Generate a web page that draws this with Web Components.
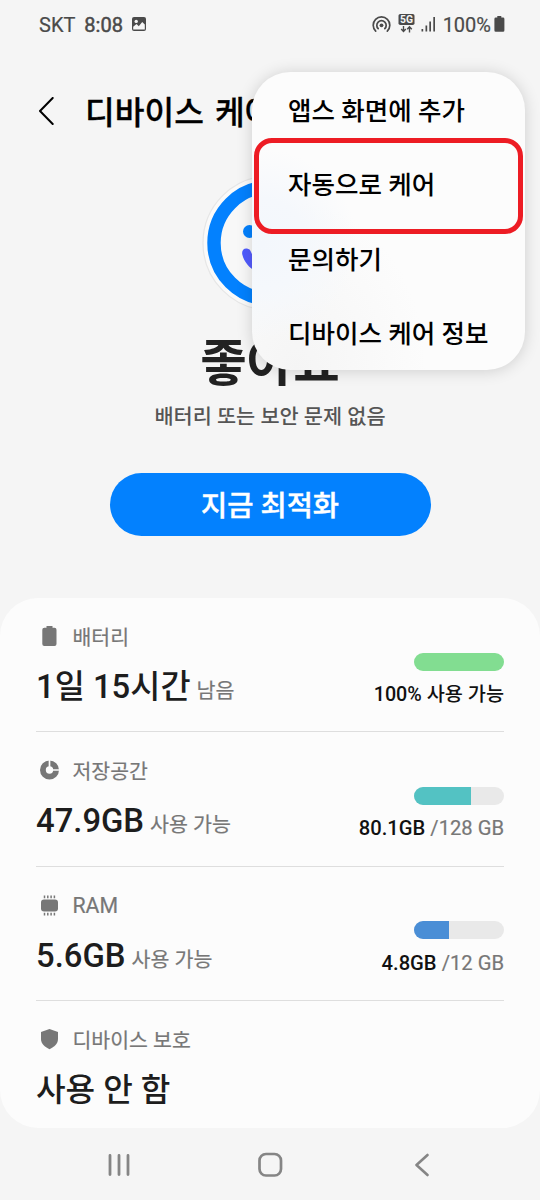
<!DOCTYPE html>
<html lang="ko">
<head>
<meta charset="utf-8">
<title>디바이스 케어</title>
<style>
html,body{margin:0;padding:0}
body{width:540px;height:1200px;overflow:hidden;background:#f5f5f5;font-family:Roboto,"Noto Sans CJK KR",sans-serif;color:#000}
</style>
</head>
<body>
<device-care></device-care>
<script>
const define = (name, html) => {
  const t = document.createElement('template');
  t.innerHTML = html;
  customElements.define(name, class extends HTMLElement {
    constructor() {
      super();
      this.attachShadow({mode: 'open'}).append(t.content.cloneNode(true));
    }
  });
};

define('status-bar', `
<style>
:host{display:flex;height:48px;padding:0 35px 0 39px;box-sizing:border-box;align-items:center;color:#4a4a4a;font-size:20px;line-height:46px;white-space:nowrap}
span{padding-top:2px;-webkit-text-stroke:.2px #4a4a4a}
.time{margin-left:9px;-webkit-text-stroke:.5px #4a4a4a}
.pic{margin-left:9px}
.cast{margin-left:auto}
.net{margin-left:7px;margin-top:-2px}
.sig{margin-left:6px}
.pct{margin-left:7px;padding-top:1px}
.bat{margin-left:3px}
svg{display:block;flex:none}
</style>
<span>SKT</span><span class="time">8:08</span>
<svg class="pic" width="14" height="14" viewBox="0 0 14 14"><rect width="14" height="14" rx="2" fill="#4a4a4a"/><circle cx="4.2" cy="4.4" r="1.7" fill="#f5f5f5"/><path d="M1.2 12.400V9.700L4.500 7l2.300 2.200 3.400-4.200 2.600 2.600v4.800z" fill="#f5f5f5"/></svg>
<svg class="cast" width="19" height="17" viewBox="0 0 19 17" fill="none" stroke="#4a4a4a" stroke-width="1.7" stroke-linecap="round"><path d="M3.700 15.200a8.300 8.300 0 1 1 11.600 0M6.200 12.700a4.700 4.700 0 1 1 6.600 0"/><circle cx="9.5" cy="9.300" r="1.900" fill="#4a4a4a" stroke="none"/></svg>
<svg class="net" width="17" height="20" viewBox="0 0 17 20"><rect x=".5" y="1" width="16" height="11" rx="1.8" fill="#4a4a4a"/><text x="8.5" y="10.2" text-anchor="middle" textLength="13" lengthAdjust="spacingAndGlyphs" font-family="Roboto" font-weight="700" font-size="10.500" fill="#f5f5f5">5G</text><path d="M5.5 13v5.500M3.2 16l2.3 2.5 2.3-2.5M11.5 19.500V14M9.2 16.300l2.3-2.5 2.3 2.5" fill="none" stroke="#4a4a4a" stroke-width="1.400"/></svg>
<svg class="sig" width="15" height="16" viewBox="0 0 15 16" fill="#4a4a4a"><rect x=".5" y="13" width="1.700" height="2.5"/><rect x="4.500" y="9.5" width="1.700" height="6"/><rect x="8.300" y="5.5" width="1.700" height="10"/><rect x="12.300" y="1" width="1.700" height="14.5"/></svg>
<span class="pct">100%</span>
<svg class="bat" width="11" height="16" viewBox="0 0 11 16"><path d="M3.3 0h4v1.6H9A1.4 1.4 0 0 1 10.4 3v11.2A1.4 1.4 0 0 1 9 15.7H1.8a1.4 1.4 0 0 1-1.4-1.5V3a1.4 1.4 0 0 1 1.4-1.4h1.5z" fill="#4a4a4a"/></svg>`);

define('title-bar', `
<style>
:host{display:flex;height:126px;align-items:center;padding-left:38px;box-sizing:border-box}
h1{margin:0 0 0 30px;font-size:32.300px;line-height:40px;font-weight:500;padding-top:4px;white-space:nowrap;word-spacing:3px;-webkit-text-stroke:.3px #000}
svg{display:block}
</style>
<svg width="17" height="28" viewBox="0 0 17 28" fill="none" stroke="#000" stroke-width="2" stroke-linecap="round" stroke-linejoin="round"><path d="M14.7 1 2 14l12.7 13"/></svg>
<h1><slot></slot></h1>`);

define('care-hero', `
<style>
:host{display:flex;flex-direction:column;align-items:center;height:424px}
.face{display:block;width:140px;height:140px;margin-top:-1px}
.state{font-size:50.5px;line-height:60px;font-weight:700;color:#222;margin-top:21px}
.note{font-size:20.8px;line-height:28px;font-weight:500;color:#555;margin-top:9px;white-space:nowrap}
button{width:321px;height:63px;border:0;border-radius:32px;background:#0381fe;color:#fff;font:500 28.5px/58px Roboto,"Noto Sans CJK KR",sans-serif;padding:5px 0 0;margin-top:42px;white-space:nowrap;-webkit-text-stroke:.4px #fff}
</style>
<svg class="face" viewBox="0 0 140 140">
<defs><linearGradient id="g" x1="0" x2="1"><stop stop-color="#4b5bff"/><stop offset=".5" stop-color="#6a5cf5"/><stop offset="1" stop-color="#0381fe"/></linearGradient></defs>
<circle cx="70" cy="70" r="67" fill="#fafafa" stroke="#e6e6e6" stroke-width="1.2"/>
<circle cx="70" cy="70" r="56" fill="#f8f8f8" stroke="#0381fe" stroke-width="13.4"/>
<circle cx="49.5" cy="58.5" r="6.5" fill="#0381fe"/><circle cx="90.5" cy="58.5" r="6.5" fill="#0381fe"/>
<path d="M47 75.5c-3.500-.5-5.500 2.500-4.700 6 2.800 11.500 13.500 20 27.700 20s25-8.500 27.700-20c.8-3.500-1.200-6.500-4.700-6-2 .3-3.500 1.500-4 3.500-2.500 7-10 11.500-19 11.500S53.500 86 51 79c-.5-2-2-3.200-4-3.500z" fill="url(#g)"/>
</svg>
<div class="state">좋아요</div>
<div class="note">배터리 또는 보안 문제 없음</div>
<button>지금 최적화</button>`);

define('usage-bar', `
<style>
:host{display:block;width:90px;height:18px;border-radius:9px;overflow:hidden;background:#e9e9e9}
:host::before{content:"";display:block;height:100%;width:var(--fill);background:var(--tone)}
</style>`);

define('care-row', `
<style>
:host{display:block;height:134.5px;padding:0 36px;box-sizing:border-box}
.in{height:100%;display:flex;justify-content:space-between;box-sizing:border-box;border-bottom:var(--rule,1px solid #dedede)}
.label{display:flex;align-items:center;height:26px;margin-top:25px;font-size:20.5px;line-height:26px;color:#777;-webkit-text-stroke:.2px #777}
.icon{width:26px;height:26px;margin-right:10.5px;display:flex}
.text{padding-top:3px}
.value{margin-top:18px;height:40px;line-height:40px;font-size:32.800px;font-weight:500;color:#1d1d1d;white-space:nowrap}
.side{display:flex;flex-direction:column;align-items:flex-end;padding-top:54.600px;font-size:20.2px;font-weight:500;color:#111;line-height:26px;white-space:nowrap}
.txt{margin-top:10.500px}
::slotted(small){font-size:20.6px;color:#777;font-weight:400;margin-left:6px;-webkit-text-stroke:.2px #777}
</style>
<div class="in"><div><div class="label"><span class="icon"><slot name="icon"></slot></span><span class="text"><slot name="label"></slot></span></div><div class="value"><slot></slot></div></div>
<div class="side"><slot name="bar"></slot><div class="txt"><slot name="side"></slot></div></div></div>`);

define('care-card', `
<style>
:host{display:block;height:530px;background:#fcfcfc;border-radius:38px;overflow:hidden}
svg{display:block}
i{font-style:normal;font-weight:400;color:#777;-webkit-text-stroke:.2px #777}
</style>
<care-row style="height:134px">
<svg slot="icon" width="26" height="26" viewBox="0 0 26 26"><path d="M10.500 3h6v1.700h2a2 2 0 0 1 2 2V21a2 2 0 0 1-2 2h-10.200a2 2 0 0 1-2-2V6.700a2 2 0 0 1 2-2h2.200z" fill="#777"/></svg>
<span slot="label">배터리</span>1일 15시간<small>남음</small>
<usage-bar slot="bar" style="--fill:100%;--tone:#82dd91"></usage-bar><span slot="side" style="font-size:19.700px">100% 사용 가능</span></care-row>
<care-row>
<svg slot="icon" width="26" height="26" viewBox="0 0 26 26"><circle cx="13.500" cy="13" r="6.600" fill="none" stroke="#777" stroke-width="5.800"/><path d="M13.500 13V2M13.500 13H24" stroke="#fcfcfc" stroke-width="1.700"/></svg>
<span slot="label">저장공간</span>47.9GB<small>사용 가능</small>
<usage-bar slot="bar" style="--fill:63%;--tone:#53c2c3"></usage-bar><span slot="side">80.1GB <i>/128 GB</i></span></care-row>
<care-row>
<svg slot="icon" width="26" height="26" viewBox="0 0 26 26"><rect x="5" y="7.500" width="17" height="12" rx="3" fill="#777"/><path d="M8.500 3.500v2.700M11.800 3.500v2.700M15.100 3.500v2.700M18.400 3.500v2.700M8.500 20.800v2.700M11.800 20.800v2.700M15.100 20.800v2.700M18.400 20.800v2.700" stroke="#777" stroke-width="1.500"/></svg>
<span slot="label" style="font-size:21.300px">RAM</span>5.6GB<small>사용 가능</small>
<usage-bar slot="bar" style="--fill:39%;--tone:#4a8ed6"></usage-bar><span slot="side">4.8GB <i>/12 GB</i></span></care-row>
<care-row style="--rule:0">
<svg slot="icon" width="26" height="26" viewBox="0 0 26 26"><path d="M13.500 3 22 6v7c0 4.700-3.700 8-8.500 10.200C8.700 21 5 17.700 5 13V6z" fill="#777"/></svg>
<span slot="label">디바이스 보호</span><span style="font-size:32.200px">사용 안 함</span></care-row>`);

define('menu-item', `
<style>
:host{display:flex;height:74.5px;align-items:center;padding-left:36px;font-size:25.5px;line-height:34px;font-weight:500;white-space:nowrap;box-sizing:border-box;padding-top:3px}
</style><slot></slot>`);

define('popup-menu', `
<style>
:host{display:block;position:absolute;left:252px;top:72px;width:273px;height:298px;border-radius:38px;background:radial-gradient(circle at 10px 172px,#f3f7fc 0,#f5f8fc 45px,rgba(252,252,252,0) 95px),radial-gradient(ellipse at 45px 298px,#f5f5f5 0,rgba(252,252,252,0) 40%),#fcfcfc;box-shadow:0 1px 16px rgba(0,0,0,.16)}
.mark{position:absolute;left:1.5px;top:66px;width:269.500px;height:96px;box-sizing:border-box;border:5px solid #ed1c24;border-radius:18px}
</style>
<menu-item>앱스 화면에 추가</menu-item><menu-item>자동으로 케어</menu-item><menu-item>문의하기</menu-item><menu-item>디바이스 케어 정보</menu-item>
<div class="mark"></div>`);

define('nav-bar', `
<style>
:host{display:grid;grid-template-columns:1fr 1fr 1fr;justify-items:center;align-items:center;height:72px;padding:2px 43px 0 43px;box-sizing:border-box}
svg{display:block;fill:none;stroke:#858585;stroke-linecap:round;stroke-linejoin:round}
</style>
<svg width="24" height="26" viewBox="0 0 24 26" stroke-width="2.800"><path d="M3 3.500v19M12 3.500v19M21 3.500v19"/></svg>
<svg width="26" height="26" viewBox="0 0 26 26" stroke-width="2.700"><rect x="2.500" y="2" width="21.500" height="21.500" rx="6.500"/></svg>
<svg width="16" height="26" viewBox="0 0 16 26" stroke-width="2.600"><path d="M14.500 3 3.500 13 14.500 23"/></svg>`);

define('device-care', `
<style>:host{display:block;position:relative;width:540px;height:1200px;overflow:hidden;background:#f5f5f5}</style>
<status-bar></status-bar>
<title-bar>디바이스 케어</title-bar>
<care-hero></care-hero>
<care-card></care-card>
<nav-bar></nav-bar>
<popup-menu></popup-menu>`);
</script>
</body>
</html>
